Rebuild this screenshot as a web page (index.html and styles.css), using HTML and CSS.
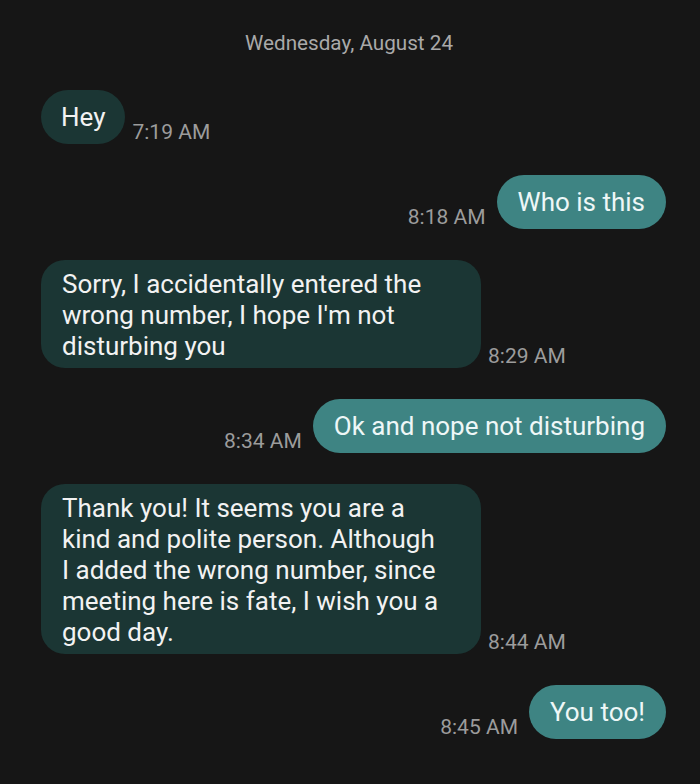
FILE: index.html
```html
<!DOCTYPE html>
<html lang="en">
<head>
  <meta charset="UTF-8">
  <meta name="viewport" content="width=device-width, initial-scale=1.0">
  <title>Messages</title>
  <link rel="stylesheet" href="styles.css">
</head>
<body>
  <div class="chat">
    <div class="date">Wednesday, August 24</div>

    <div class="row received">
      <div class="bubble">Hey</div>
      <span class="time">7:19 AM</span>
    </div>

    <div class="row sent">
      <span class="time">8:18 AM</span>
      <div class="bubble">Who is this</div>
    </div>

    <div class="row received">
      <div class="bubble long">Sorry, I accidentally entered the<br>wrong number, I hope I'm not<br>disturbing you</div>
      <span class="time">8:29 AM</span>
    </div>

    <div class="row sent">
      <span class="time">8:34 AM</span>
      <div class="bubble">Ok and nope not disturbing</div>
    </div>

    <div class="row received">
      <div class="bubble long">Thank you! It seems you are a<br>kind and polite person. Although<br>I added the wrong number, since<br>meeting here is fate, I wish you a<br>good day.</div>
      <span class="time">8:44 AM</span>
    </div>

    <div class="row sent">
      <span class="time">8:45 AM</span>
      <div class="bubble">You too!</div>
    </div>
  </div>
</body>
</html>
```

FILE: styles.css
```css
body {
  margin: 0;
  background-color: #161616;
  font-family: Roboto, 'Noto Sans', sans-serif;
  height: 784px;
  overflow: hidden;
}

.chat {
  display: flex;
  flex-direction: column;
  gap: 31px;
  padding: 31px 34px 0 41px;
}

.date {
  text-align: center;
  font-size: 20.7px;
  line-height: 24px;
  color: #a9a9a9;
  margin-bottom: 4px;
  padding-right: 9px;
}

.row {
  display: flex;
  align-items: flex-end;
  gap: 7px;
}

.row.sent {
  justify-content: flex-end;
  gap: 11px;
}

.bubble {
  display: flex;
  align-items: center;
  min-height: 54px;
  box-sizing: border-box;
  padding: 7.5px 20px;
  border-radius: 27px;
  font-size: 26px;
  line-height: 31px;
  white-space: nowrap;
}

.received .bubble {
  background-color: #1b3634;
  color: #f2f2f2;
}

.sent .bubble {
  background-color: #3e8483;
  color: #eef7f7;
  padding: 7.5px 21px;
}

.bubble.long {
  width: 440px;
  padding: 8.5px 21px 6.5px;
  border-radius: 24px;
}

.time {
  font-size: 21px;
  line-height: 24px;
  color: #9c9c9c;
  white-space: nowrap;
}
```
